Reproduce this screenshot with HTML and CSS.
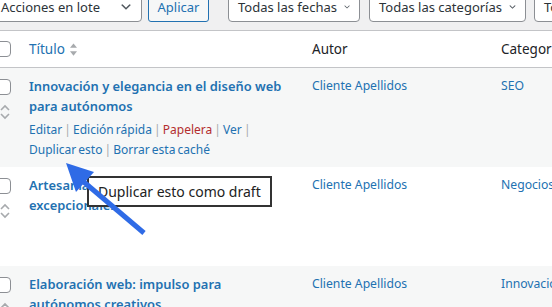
FILE: index.html
```html
<!DOCTYPE html>
<html lang="es">
<head>
<meta charset="UTF-8">
<title>Entradas</title>
<link rel="stylesheet" href="styles.css">
</head>
<body>
<div class="page">
  <div class="tablenav">
    <div class="select bulk">Acciones en lote
      <svg class="caret" viewBox="0 0 20 20"><path d="M5 6l5 5 5-5 2 1-7 7-7-7 2-1z"/></svg>
    </div>
    <button class="btn">Aplicar</button>
    <div class="select dates">Todas las fechas
      <svg class="caret" viewBox="0 0 20 20"><path d="M5 6l5 5 5-5 2 1-7 7-7-7 2-1z"/></svg>
    </div>
    <div class="select cats">Todas las categorías
      <svg class="caret" viewBox="0 0 20 20"><path d="M5 6l5 5 5-5 2 1-7 7-7-7 2-1z"/></svg>
    </div>
    <div class="select more">Todos los formatos
      <svg class="caret" viewBox="0 0 20 20"><path d="M5 6l5 5 5-5 2 1-7 7-7-7 2-1z"/></svg>
    </div>
  </div>

  <div class="posts">
    <div class="row head">
      <div class="cell check"><span class="cb"></span></div>
      <div class="cell title-col">
        <a class="sortable">Título
          <svg class="sort" viewBox="0 0 8 14"><path d="M4 0l4 5H0z"/><path d="M4 14l4-5H0z"/></svg>
        </a>
      </div>
      <div class="cell">Autor</div>
      <div class="cell">Categoría</div>
    </div>

    <div class="row alt">
      <div class="cell check">
        <span class="cb"></span>
        <svg class="toggle" viewBox="0 0 10 16"><path d="M1 6l4-4 4 4M1 10l4 4 4-4"/></svg>
      </div>
      <div class="cell title-col">
        <a class="row-title">Innovación y elegancia en el diseño web para autónomos</a>
        <div class="row-actions">
          <a>Editar</a> <span class="sep">|</span> <a>Edición rápida</a> <span class="sep">|</span> <a class="trash">Papelera</a> <span class="sep">|</span> <a>Ver</a> <span class="sep">|</span>
          <a>Duplicar esto</a> <span class="sep">|</span> <a>Borrar esta caché</a>
        </div>
      </div>
      <div class="cell"><a>Cliente Apellidos</a></div>
      <div class="cell"><a>SEO</a></div>
    </div>

    <div class="row">
      <div class="cell check">
        <span class="cb"></span>
        <svg class="toggle" viewBox="0 0 10 16"><path d="M1 6l4-4 4 4M1 10l4 4 4-4"/></svg>
      </div>
      <div class="cell title-col">
        <a class="row-title">Artesanía digital: diseños web excepcionales</a>
        <div class="row-actions hidden">
          <a>Editar</a> <span class="sep">|</span> <a>Edición rápida</a> <span class="sep">|</span> <a class="trash">Papelera</a> <span class="sep">|</span> <a>Ver</a> <span class="sep">|</span>
          <a>Duplicar esto</a> <span class="sep">|</span> <a>Borrar esta caché</a>
        </div>
      </div>
      <div class="cell"><a>Cliente Apellidos</a></div>
      <div class="cell"><a>Negocios</a></div>
    </div>

    <div class="row alt">
      <div class="cell check">
        <span class="cb"></span>
        <svg class="toggle" viewBox="0 0 10 16"><path d="M1 6l4-4 4 4M1 10l4 4 4-4"/></svg>
      </div>
      <div class="cell title-col">
        <a class="row-title">Elaboración web: impulso para autónomos creativos</a>
      </div>
      <div class="cell"><a>Cliente Apellidos</a></div>
      <div class="cell"><a>Innovación</a></div>
    </div>
  </div>

  <div class="tooltip">Duplicar esto como draft</div>
  <svg class="arrow" viewBox="0 0 552 307" width="552" height="307">
    <line x1="144" y1="233" x2="78" y2="177" />
    <polygon points="66,163 94,172 76,192" />
  </svg>
</div>
</body>
</html>
```

FILE: styles.css
```css
body {
  margin: 0;
  font-family: "Noto Sans", "Open Sans", sans-serif;
  font-size: 12.2px;
  color: #1d2327;
  background-color: #f0f0f1;
  overflow: hidden;
}

a {
  color: #2271b1;
  text-decoration: none;
}

.page {
  position: relative;
  width: 552px;
  height: 307px;
  overflow: hidden;
}

/* filters bar */
.tablenav {
  display: flex;
  align-items: flex-start;
  margin: -8px 0 0 -9px;
  height: 38px;
  white-space: nowrap;
}

.tablenav > * {
  flex-shrink: 0;
}

.select {
  display: flex;
  align-items: center;
  justify-content: space-between;
  box-sizing: border-box;
  height: 30px;
  padding: 0 8px 0 9px;
  border: 1px solid #8c8f94;
  border-radius: 4px;
  background-color: #fff;
  font-size: 13px;
  color: #2c3338;
}

.caret {
  width: 14px;
  height: 14px;
  fill: #50575e;
  margin-left: 6px;
}

.bulk { width: 151px; }
.dates { width: 132px; margin-left: 19px; }
.cats { width: 157px; margin-left: 9px; }
.more { width: 150px; margin-left: 8px; }

.btn {
  box-sizing: border-box;
  height: 30px;
  width: 61px;
  margin-left: 6px;
  padding: 0;
  border: 1px solid #2271b1;
  border-radius: 3px;
  background-color: #f6f7f7;
  color: #2271b1;
  font-family: inherit;
  font-size: 13px;
}

/* list table */
.posts {
  margin-left: -13px;
  border-top: 1px solid #c3c4c7;
  background-color: #fff;
}

.row {
  display: grid;
  grid-template-columns: 32px 283px 189px 1fr;
  background-color: #fff;
}

.row.alt {
  background-color: #f6f7f7;
}

.row.head {
  height: 36px;
  align-items: center;
  border-bottom: 1px solid #c3c4c7;
  font-size: 13.5px;
}

.row.head .cell {
  padding-top: 0;
  padding-bottom: 0;
}

.cell {
  padding: 8px 10px 8px 10px;
  line-height: 20px;
  white-space: normal;
}

.cell.check {
  padding: 0 0 0 8px;
  display: flex;
  flex-direction: column;
}

.row:not(.head) .cell.check {
  padding-top: 11px;
}

.cb {
  display: block;
  box-sizing: border-box;
  width: 16px;
  height: 16px;
  border: 1px solid #8c8f94;
  border-radius: 4px;
  background-color: #fff;
}

.toggle {
  width: 10px;
  height: 16px;
  margin: 9px 0 0 5px;
  fill: none;
  stroke: #a7aaad;
  stroke-width: 1.6;
}

.sortable {
  display: inline-flex;
  align-items: center;
}

.sort {
  width: 7px;
  height: 13px;
  margin-left: 5px;
  fill: #a7aaad;
}

.row-title {
  display: block;
  font-size: 12.9px;
  font-weight: 600;
}

.row-actions {
  margin-top: 4px;
  line-height: 19.5px;
  font-size: 12px;
  word-spacing: -1px;
}

.row-actions.hidden {
  visibility: hidden;
}

.sep {
  color: #a7aaad;
}

.trash {
  color: #b32d2e;
}

/* annotation */
.tooltip {
  position: absolute;
  left: 87px;
  top: 176px;
  width: 185px;
  height: 31px;
  box-sizing: border-box;
  padding: 0 0 0 9px;
  border: 2px solid #333;
  background-color: #fff;
  color: #222;
  font-size: 14px;
  line-height: 27px;
  white-space: nowrap;
}

.arrow {
  position: absolute;
  left: 0;
  top: 0;
}

.arrow line {
  stroke: #2f6be6;
  stroke-width: 5;
}

.arrow polygon {
  fill: #2f6be6;
}
```
